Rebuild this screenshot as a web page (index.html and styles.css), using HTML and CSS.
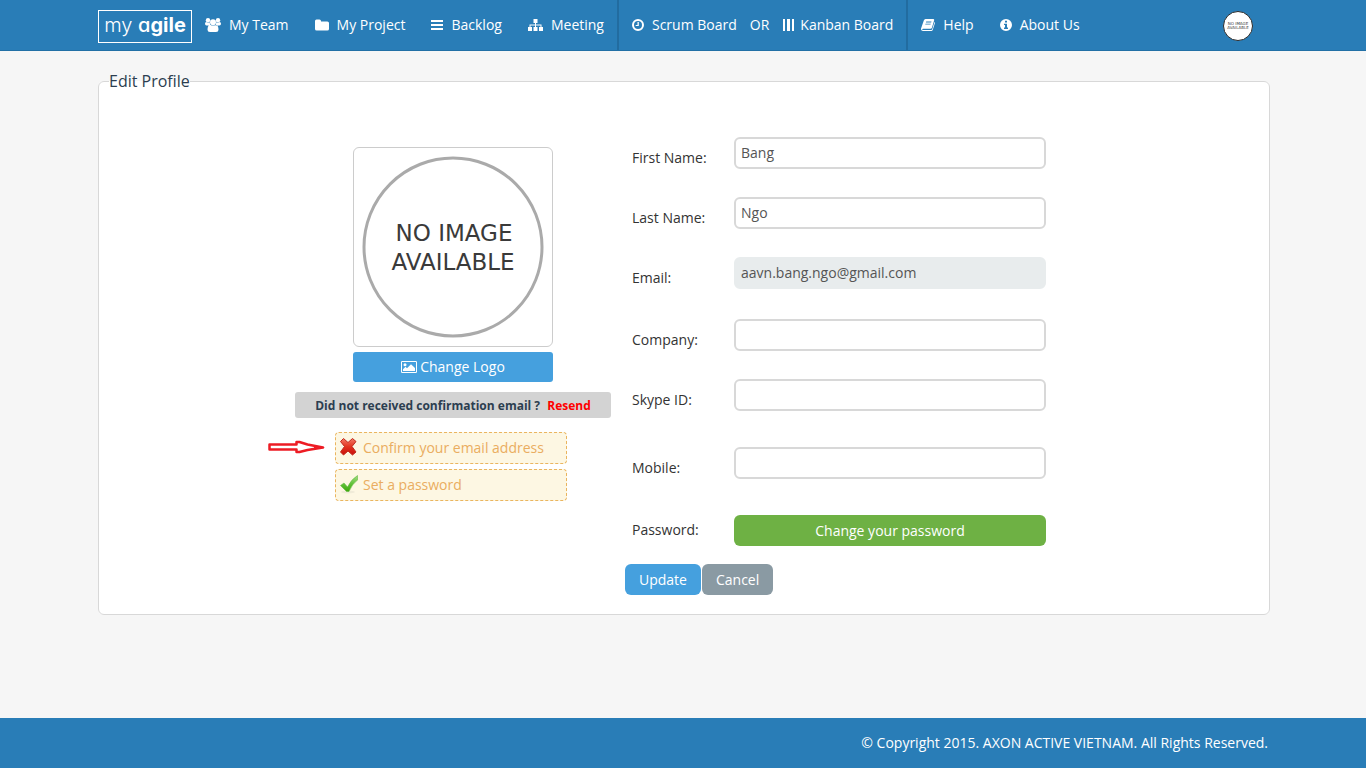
FILE: index.html
```html
<!DOCTYPE html>
<html lang="en">
<head>
<meta charset="utf-8">
<meta name="viewport" content="width=device-width, initial-scale=1">
<title>Edit Profile - my agile</title>
<link rel="stylesheet" href="styles.css">
</head>
<body>
<header class="topbar">
  <div class="container topbar-inner">
    <a class="logo" href="#">my <span class="logo-mid">a</span><b>gile</b></a>
    <nav class="nav">
      <a class="nav-link" href="#"><svg class="icon" width="16" height="14" viewBox="0 0 16 14"><circle cx="3" cy="2.200" r="2.200"/><circle cx="13" cy="2.200" r="2.200"/><circle cx="8" cy="4.200" r="3"/><path d="M1.300 4q1.700 1.200 3.400.3.100 1.300.9 3.100H1.500Q0 7.400 0 5.800 0 4 1.300 4zM14.700 4q-1.700 1.200-3.400.3-.1 1.300-.9 3.100h4.100Q16 7.400 16 5.800 16 4 14.700 4zM5.300 6.700Q8 8.500 10.700 6.700 13.500 7.200 13.500 11.800 13.500 14 11 14H5q-2.500 0-2.500-2.200 0-4.600 2.800-5.100z"/></svg>My Team</a>
      <a class="nav-link" href="#"><svg class="icon" width="14" height="12" viewBox="0 0 14 12"><path d="M0 2Q0 .5 1.500.5h3Q6 .5 6 2v.4h6.300Q14 2.400 14 4v6q0 1.500-1.700 1.500H1.700Q0 11.500 0 10z"/></svg>My Project</a>
      <a class="nav-link" href="#"><svg class="icon" width="12" height="12" viewBox="0 0 12 12"><path d="M0 1h12v2H0zM0 5h12v2H0zM0 9h12v2H0z"/></svg>Backlog</a>
      <a class="nav-link" href="#"><svg class="icon" width="15" height="12" viewBox="0 0 15 12"><path d="M5.500 0h4v4H8v1.500h5.500v2.500H15v4h-4V8h1.500V6.500H8V8h1.500v4h-4V8H7V6.500H2.500V8H4v4H0V8h1.500V5.500H7V4H5.500z"/></svg>Meeting</a>
      <span class="nav-boards">
        <a class="nav-link" href="#"><svg class="icon" width="12" height="12" viewBox="0 0 12 12"><circle cx="6" cy="6" r="5" fill="none" stroke="#fff" stroke-width="2"/><path d="M5.500 3h1.300v4H3.700V5.900h1.800z"/></svg>Scrum Board</a>
        <span class="nav-or">OR</span>
        <a class="nav-link nav-link-kanban" href="#"><svg class="icon" width="11" height="12" viewBox="0 0 11 12"><path d="M0 0h2v12H0zM4 0h3v12H4zM9 0h2v12H9z"/></svg>Kanban Board</a>
      </span>
      <a class="nav-link" href="#"><svg class="icon" width="14" height="12" viewBox="0 0 14 12"><path fill-rule="evenodd" d="M4.500 0h7.700q1.300.1.900 1.400l-2.200 7.300q-.3 1-1.400 1H2q-1 0-.8.7.2.500 1 .500h8q.8 0 1-.7L13.500 3q.7.400.4 1.300l-2.200 6.700q-.3 1-1.400 1H2Q.2 12 0 10.300q-.1-.6.3-1.500l2.500-7.200Q3.300 0 4.500 0zM5.200 2.500l-.3.900h5.300l.3-.9zM4.500 4.700l-.3.900h5.300l.3-.9z"/></svg>Help</a>
      <a class="nav-link" href="#"><svg class="icon" width="12" height="12" viewBox="0 0 12 12"><path fill-rule="evenodd" d="M6 0a6 6 0 1 0 0 12A6 6 0 0 0 6 0zM5 1.800h2v1.700H5zM4 4.700h3v3.800h1V10H4V8.500h1V6H4z"/></svg>About Us</a>
    </nav>
    <a class="account" href="#" aria-label="Account"><svg width="30" height="30" viewBox="0 0 30 30"><circle cx="15" cy="15" r="14.500" fill="#fff" stroke="#2b2b2b"/><text class="avatar-text" x="15" y="14">NO IMAGE</text><text class="avatar-text" x="15" y="18">AVAILABLE</text></svg></a>
  </div>
</header>

<main class="container main">
  <form>
    <fieldset class="panel">
      <legend class="panel-title">Edit Profile</legend>
      <div class="profile">
        <section class="side">
          <div class="photo">
            <svg width="198" height="198" viewBox="0 0 198 198" role="img" aria-label="No image available"><circle cx="99" cy="99" r="89" fill="#fff" stroke="#aaa" stroke-width="3"/><text class="photo-text" x="100" y="93">NO IMAGE</text><text class="photo-text" x="99" y="122">AVAILABLE</text></svg>
          </div>
          <button class="btn btn-logo" type="button"><svg class="icon" width="16" height="12" viewBox="0 0 16 12"><path fill-rule="evenodd" d="M1.200 0h13.600Q16 0 16 1.200v9.600q0 1.200-1.200 1.200H1.200Q0 12 0 10.800V1.200Q0 0 1.200 0zM1 1v10h14V1z"/><circle cx="4" cy="3.700" r="1.500"/><path d="M2 10V8.300l2.500-2.500L6 7.300 10 3.200l4 3.900V10z"/></svg>Change Logo</button>
          <p class="resend">Did not received confirmation email ? <a class="resend-link" href="#">Resend</a></p>
          <ul class="tasks">
            <li class="task">
              <svg class="pointer" width="58" height="14" viewBox="0 0 58 14"><path d="M1.500 4.500h27V2h3l8 2.500L55 7.500l-15.500 2.500-8 2h-3V9.500h-27z" fill="#fff" stroke="#ed1c24" stroke-width="2.500" stroke-linejoin="round"/><path d="M46 5.500 57 7.500 46 9.500z" fill="#ed1c24"/></svg>
              <svg class="task-icon" width="18" height="20" viewBox="0 0 18 20"><defs><linearGradient id="red" x1="0" y1="0" x2="0" y2="1"><stop offset="0" stop-color="#f47a66"/><stop offset=".5" stop-color="#e2331e"/><stop offset="1" stop-color="#c90d0b"/></linearGradient></defs><path d="M3.500 .5 8 4.500 12.500 .5 16 3.500 12 8.500l4 5.500L12.500 17 8 13 3.500 17 .5 14 4.500 8.500.5 3.500z" fill="url(#red)" stroke="#c02a1d" stroke-linejoin="round"/></svg>
              Confirm your email address
            </li>
            <li class="task">
              <svg class="task-icon" width="18" height="20" viewBox="0 0 18 20"><defs><linearGradient id="green" x1="0" y1="0" x2="0" y2="1"><stop offset="0" stop-color="#a5de85"/><stop offset=".5" stop-color="#62c33b"/><stop offset="1" stop-color="#3da80b"/></linearGradient></defs><ellipse cx="8" cy="17" rx="7" ry="1.500" fill="#f0ebd8"/><path d="M.5 10.500 4 8l3.500 4Q11 4.500 17.500.5V5Q12 9 9 16.500H6.500z" fill="url(#green)" stroke="#64b845" stroke-width=".6"/></svg>
              Set a password
            </li>
          </ul>
        </section>
        <section class="fields">
          <div class="row"><label class="label" for="first">First Name:</label><input class="input" id="first" type="text" value="Bang"></div>
          <div class="row"><label class="label" for="last">Last Name:</label><input class="input" id="last" type="text" value="Ngo"></div>
          <div class="row"><label class="label" for="email">Email:</label><input class="input" id="email" type="email" value="aavn.bang.ngo@gmail.com" disabled></div>
          <div class="row row-contact"><label class="label" for="company">Company:</label><input class="input" id="company" type="text"></div>
          <div class="row"><label class="label" for="skype">Skype ID:</label><input class="input" id="skype" type="text"></div>
          <div class="row row-spaced"><label class="label" for="mobile">Mobile:</label><input class="input" id="mobile" type="tel"></div>
          <div class="row row-spaced row-password"><label class="label" for="password">Password:</label><button class="btn btn-password" id="password" type="button">Change your password</button></div>
          <div class="actions"><button class="btn" type="submit">Update</button><button class="btn btn-cancel" type="button">Cancel</button></div>
        </section>
      </div>
    </fieldset>
  </form>
</main>

<footer class="footer">
  <div class="container">© Copyright 2015. AXON ACTIVE VIETNAM. All Rights Reserved.</div>
</footer>
</body>
</html>
```

FILE: styles.css
```css
* {
  box-sizing: border-box;
}

body {
  margin: 0;
  min-height: 100vh;
  display: flex;
  flex-direction: column;
  background: #f6f6f6;
  color: #2c3e50;
  font: 14px/20px "Open Sans", "Noto Sans", sans-serif;
}

a {
  color: inherit;
  text-decoration: none;
}

.container {
  width: 100%;
  max-width: 1170px;
  margin: 0 auto;
}

.icon {
  fill: currentColor;
  flex: none;
}

/* Top bar */
.topbar {
  background: #297db7;
  border-bottom: 1px solid #2270a6;
  color: #fff;
}

.topbar-inner {
  display: flex;
  align-items: center;
  min-height: 50px;
}

/* cv11 selects the single-storey "a" */
.logo {
  border: 1px solid #fff;
  width: 94px;
  height: 33px;
  margin-top: 3px;
  text-align: center;
  font: 300 20px/28px Inter, sans-serif;
  font-feature-settings: "cv11";
  white-space: nowrap;
}

.logo-mid {
  font-weight: 500;
}

.logo b {
  font-weight: 700;
}

.nav,
.nav-boards {
  display: flex;
  align-items: center;
}

.nav-boards {
  border: solid #226ca0;
  border-width: 0 2px;
}

.nav-link {
  display: flex;
  align-items: center;
  gap: 8px;
  padding: 15px 13px;
  white-space: nowrap;
}

.nav-link-kanban {
  gap: 6px;
  padding-left: 14px;
}

.account {
  display: flex;
  margin: 2px 15px 0 auto;
}

.avatar-text,
.photo-text {
  fill: #3a3a3a;
  font-family: "DejaVu Sans", sans-serif;
  text-anchor: middle;
}

.avatar-text {
  font-size: 4px;
}

/* Profile panel */
.main {
  flex: 1;
  padding: 20px 0;
}

.panel {
  margin: 0 -2px 0 0;
  padding: 46px 10px 19px;
  border: 1px solid #d8d8d8;
  border-radius: 6px;
  background: #fff;
}

.panel-title {
  padding: 0;
  font-size: 16px;
}

.profile {
  display: grid;
  grid-template-columns: 316px 421px;
  justify-content: center;
  column-gap: 14px;
  padding-right: 27px;
}

.side {
  display: flex;
  flex-direction: column;
  align-items: center;
  padding-top: 10px;
}

.photo {
  display: flex;
  border: 1px solid #ccc;
  border-radius: 6px;
}

.photo-text {
  font-size: 23px;
}

.btn {
  padding: 5px 14px;
  border: 0;
  border-radius: 6px;
  background: #45a0de;
  color: #fff;
  font: inherit;
  line-height: 21px;
}

.btn-logo {
  display: flex;
  align-items: center;
  justify-content: center;
  gap: 3px;
  width: 200px;
  margin: 5px 0 10px;
  border-radius: 3px;
  line-height: 20px;
}

.resend {
  width: 100%;
  margin: 0 0 14px;
  padding: 4px 3px 2px;
  border-radius: 3px;
  background: #d3d3d3;
  font-size: 12px;
  font-weight: 700;
  text-align: center;
}

.resend-link {
  margin-left: 4px;
  color: #f00;
}

.tasks {
  display: grid;
  gap: 5px;
  width: 232px;
  margin: 0 4px 0 0;
  padding: 0;
  list-style: none;
}

.task {
  position: relative;
  display: flex;
  align-items: center;
  gap: 5px;
  padding: 5px 4px;
  border: 1px dashed #eab55f;
  border-radius: 4px;
  background: #fdf7e3;
  color: #eaad60;
}

.task-icon {
  flex: none;
}

.pointer {
  position: absolute;
  top: 7px;
  right: 240px;
}

/* Form */
.row {
  display: grid;
  grid-template-columns: 102px 1fr;
  align-items: start;
  margin-bottom: 28px;
  padding-left: 7px;
}

.row-contact {
  margin-top: 30px;
}

.row-spaced {
  margin-top: 36px;
}

.label {
  padding-top: 11px;
  color: #333;
}

.input {
  width: 100%;
  height: 32px;
  padding: 0 5px 2px;
  border: 2px solid #d8d8d8;
  border-radius: 6px;
  background: #fff;
  color: #555;
  font: inherit;
}

.input:disabled {
  border-color: #e8eced;
  background: #e8eced;
}

.row-password {
  margin-bottom: 18px;
}

.row-password .label {
  padding-top: 5px;
}

.btn-password {
  background: #6eb144;
}

.actions {
  display: flex;
  gap: 1px;
}

.btn-cancel {
  background: #8a9aa3;
}

/* Footer */
.footer {
  padding: 15px 0;
  background: #297db7;
  color: #fff;
  text-align: right;
}
```
